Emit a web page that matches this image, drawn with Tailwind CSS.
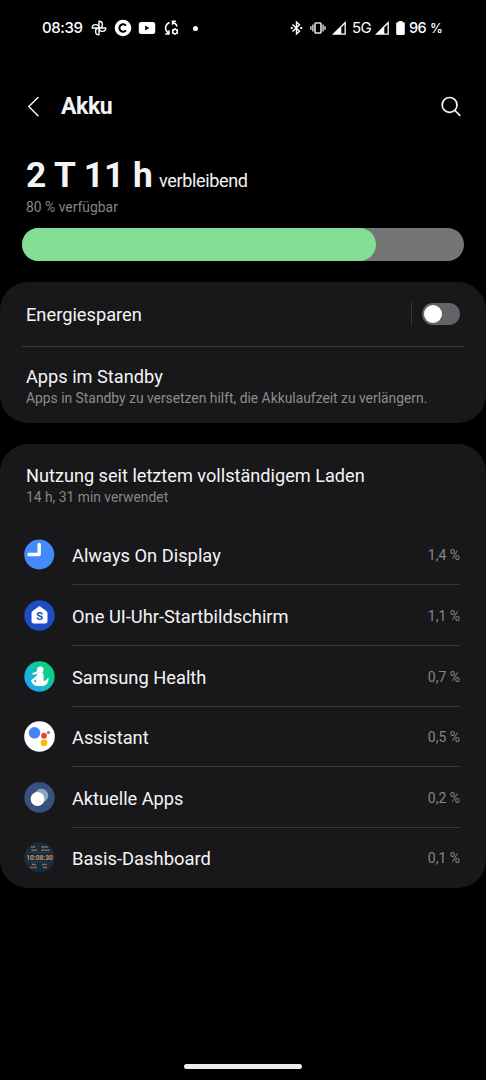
<!DOCTYPE html>
<html lang="de">
<head>
<meta charset="utf-8">
<title>Akku</title>
<script src="https://cdn.jsdelivr.net/npm/@tailwindcss/browser@4"></script>
</head>
<body class="bg-black">
<div class="flex h-[1080px] w-[486px] flex-col overflow-hidden bg-black font-['Roboto',sans-serif] text-[#f4f4f6]">
  <header class="flex h-14 shrink-0 items-center pl-[42px] pr-[42px] font-['Inter',sans-serif] text-[15px] font-medium text-white">
    <span class="w-[49px] whitespace-nowrap tracking-[-0.4px]">08:39</span>
    <svg class="h-4 w-4 shrink-0" viewBox="0 0 16 16" fill="none" stroke="#fff" stroke-width="1.4" stroke-linejoin="round"><path d="M8 8V1.200A3.300 3.300 0 0 1 8 8ZM8 8H14.800A3.300 3.300 0 0 1 8 8ZM8 8V14.800A3.300 3.300 0 0 1 8 8ZM8 8H1.200A3.300 3.300 0 0 1 8 8Z"/></svg>
    <svg class="ml-[7px] h-[18px] w-[18px] shrink-0" viewBox="0 0 18 18"><circle cx="9" cy="9" r="8.300" fill="#fff"/><path d="M11.900 6.600A3.700 3.700 0 1 0 11.900 11.400" fill="none" stroke="#000" stroke-width="2.100"/></svg>
    <svg class="ml-[6px] h-[14px] w-[18px] shrink-0" viewBox="0 0 18 14"><rect x=".8" y="1" width="16.400" height="12" rx="2.500" fill="#fff"/><path d="M7.200 4.600v4.800L11.300 7z" fill="#000"/></svg>
    <svg class="ml-[8px] h-4 w-4 shrink-0" viewBox="0 0 16 16" fill="none" stroke="#fff" stroke-width="1.500"><path d="M5.500 2.500C.8 4.500.2 10 4.300 13.200M1.200 13.900H5V10.300M13 6.500C12.600 4.500 11.500 3.300 9 2.500M11.900 1.300H8.500V4.800"/><circle cx="11" cy="11.500" r="2.300"/><path d="M11 8v1.300M11 13.700v1.300M8 9.800l1.200.7M12.800 12.500l1.200.7M8 13.200l1.200-.7M12.800 10.500l1.200-.7" stroke-width="1.100"/></svg>
    <span class="ml-[13px] h-[5px] w-[5px] shrink-0 rounded-full bg-white"></span>
    <svg class="ml-auto h-4 w-[13px] shrink-0" viewBox="0 0 13 16" fill="none" stroke="#fff" stroke-width="1.400"><path d="M2.500 4.500 9.500 11.300 6.500 14V2L9.500 4.700 2.500 11.500"/><path d="M.8 8h1.900M10.300 8h1.900" stroke-width="1.900"/></svg>
    <svg class="ml-[7px] h-4 w-4 shrink-0" viewBox="0 0 16 16" fill="none" stroke="#e0e0e0" stroke-width="1.400"><rect x="5" y="3" width="6" height="10" rx=".8" stroke-width="1.600"/><path d="M2.900 4.500v7M13.100 4.500v7M.9 6.200v3.600M15.100 6.200v3.600"/></svg>
    <svg class="ml-[6px] h-[14px] w-[14px] shrink-0" viewBox="0 0 14 14"><path d="M0 13.800H13.800V0Z" fill="#fff"/><path d="M9.300 6.400 12.500 3.200V12.500H9.300Z" fill="#000"/></svg>
    <span class="ml-[6px] w-[23px] whitespace-nowrap font-normal tracking-[-0.7px]">5G</span>
    <svg class="h-[14px] w-[14px] shrink-0" viewBox="0 0 14 14"><path d="M0 13.800H13.800V0Z" fill="#fff"/><path d="M9.300 6.400 12.500 3.200V12.500H9.300Z" fill="#000"/></svg>
    <svg class="ml-[7px] h-[14px] w-[9px] shrink-0" viewBox="0 0 9 14"><path d="M2.500 0h4v1.300H7.500Q8.800 1.300 8.800 2.500V12.700Q8.800 14 7.500 14H1.500Q.2 14 .2 12.700V2.500Q.2 1.300 1.500 1.300h1Z" fill="#fff"/></svg>
    <span class="ml-[4px] flex w-[35px] items-baseline gap-[4px] whitespace-nowrap text-[14.5px] tracking-[-0.6px]"><span>96</span> <span class="text-[13px]">%</span></span>
  </header>

  <div class="flex h-[101px] shrink-0 items-center pl-[27px] pr-[24px]">
    <svg class="h-6 w-3" viewBox="0 0 12 24" fill="none" stroke="#f4f4f6" stroke-width="1.500" stroke-linecap="round" stroke-linejoin="round"><path d="M11 2.500 1.800 11.500 11 20.700"/></svg>
    <h1 class="ml-[22px] pt-[2px] text-[23px] font-bold tracking-[-0.4px]">Akku</h1>
    <svg class="ml-auto h-[22px] w-[22px]" viewBox="0 0 22 22" fill="none" stroke="#f4f4f6" stroke-width="1.700" stroke-linecap="round"><circle cx="9.600" cy="8.900" r="7.400"/><path d="m15 14.500 4.800 4.800"/></svg>
  </div>

  <section class="h-[125px] shrink-0 px-[22px]">
    <div class="flex h-[40px] items-baseline pl-1">
      <span class="w-[126px] whitespace-nowrap text-[35.3px] font-bold leading-[36px]">2 T 11 h</span><span class="ml-[7px] text-[18px] leading-[26px] tracking-[-0.35px]">verbleibend</span>
    </div>
    <div class="flex h-[31px] items-start pl-1 text-[13.9px] leading-[20px] text-[#858587]">80 % verfügbar</div>
    <div class="h-[33px] overflow-hidden rounded-full bg-[#757575]"><div class="h-full w-[354px] rounded-r-full bg-[#82df94]"></div></div>
  </section>

  <section class="h-[141px] shrink-0 rounded-[28px] bg-[#18181a] px-[22px]">
    <div class="flex h-[65px] items-center border-b border-[#38383a] pl-1 pr-1">
      <span class="pt-[2px] text-[18.25px]">Energiesparen</span>
      <span class="ml-auto h-6 w-px bg-[#343436]"></span>
      <span class="ml-[10px] flex h-[22px] w-[38px] items-center rounded-full bg-[#646368] px-[2px]"><span class="h-[18px] w-[18px] rounded-full bg-white"></span></span>
    </div>
    <div class="pl-1 pt-[19px]">
      <div class="text-[18.2px] leading-[22px]">Apps im Standby</div>
      <div class="whitespace-nowrap text-[13.85px] leading-[20px] text-[#8c8c8e]">Apps in Standby zu versetzen hilft, die Akkulaufzeit zu verlängern.</div>
    </div>
  </section>

  <section class="mt-[21px] h-[444px] shrink-0 rounded-[28px] bg-[#18181a]">
    <div class="h-[80.5px] pl-[26px] pt-[21px]">
      <div class="whitespace-nowrap text-[18.15px] leading-[22px]">Nutzung seit letztem vollständigem Laden</div>
      <div class="text-[13.85px] leading-[21px] text-[#858587]">14 h, 31 min verwendet</div>
    </div>
    <div class="flex h-[60.7px] items-center pl-6 pr-[26px]">
      <svg class="h-[31px] w-[31px] shrink-0" viewBox="0 0 31 31"><circle cx="15.200" cy="15.500" r="15" fill="#448aff"/><path d="M15.200 5.500V15.500H5" fill="none" stroke="#fff" stroke-width="3.400" stroke-linecap="round" stroke-linejoin="round"/></svg>
      <div class="ml-[17px] flex h-full flex-1 items-center justify-between border-b border-[#38383a] pt-[3px]"><span class="text-[18.3px]">Always On Display</span><span class="text-[14px] text-[#858587]">1,4 %</span></div>
    </div>
    <div class="flex h-[60.7px] items-center pl-6 pr-[26px]">
      <svg class="h-[31px] w-[31px] shrink-0" viewBox="0 0 31 31"><circle cx="15.500" cy="15.500" r="15.200" fill="#1e4bc8"/><path d="M15.500 6.500 22.200 11.300Q23 12 23 13V21.500Q23 23 21.500 23H9.500Q8 23 8 21.500V13Q8 12 8.800 11.300Z" fill="#fff" stroke="#fff" stroke-linejoin="round"/><text x="15.500" y="20" text-anchor="middle" font-family="Roboto" font-weight="700" font-size="11.500" fill="#1e4bc8">S</text></svg>
      <div class="ml-[17px] flex h-full flex-1 items-center justify-between border-b border-[#38383a] pt-[3px]"><span class="text-[18.3px]">One UI-Uhr-Startbildschirm</span><span class="text-[14px] text-[#858587]">1,1 %</span></div>
    </div>
    <div class="flex h-[60.7px] items-center pl-6 pr-[26px]">
      <svg class="h-[31px] w-[31px] shrink-0" viewBox="0 0 31 31"><defs><linearGradient id="health" x1=".1" y1=".85" x2=".8" y2=".25"><stop offset="0" stop-color="#1fa2ff"/><stop offset=".5" stop-color="#15bcc0"/><stop offset="1" stop-color="#08d27c"/></linearGradient></defs><circle cx="15.500" cy="15.500" r="15.200" fill="url(#health)"/><circle cx="16.300" cy="8.600" r="3.200" fill="#fff"/><path d="M13.800 11.300 18.700 11.500Q20.500 14.500 19.300 19.300Q22 21 23.300 17.200Q24.500 16 24.700 18Q24 23.500 19.500 25H12.500Q8 24 7 19.200L12.300 15.300Z" fill="#fff"/><path d="M14 10.200Q12.500 12.500 9.300 12.700" fill="none" stroke="#fff" stroke-width="1.900" stroke-linecap="round"/><path d="M9.800 19.800 12.200 18.200 11.700 22Z" fill="#19afd8"/></svg>
      <div class="ml-[17px] flex h-full flex-1 items-center justify-between border-b border-[#38383a] pt-[3px]"><span class="text-[18.3px]">Samsung Health</span><span class="text-[14px] text-[#858587]">0,7 %</span></div>
    </div>
    <div class="flex h-[60.7px] items-center pl-6 pr-[26px]">
      <svg class="h-[31px] w-[31px] shrink-0" viewBox="0 0 31 31"><circle cx="15.500" cy="15.500" r="15.300" fill="#fff"/><circle cx="10.500" cy="11.800" r="5.800" fill="#4285f4"/><circle cx="20" cy="14.700" r="2.900" fill="#ea4335"/><circle cx="20" cy="21.800" r="3.400" fill="#fbbc04"/><circle cx="24.400" cy="11.500" r="1.500" fill="#34a853"/></svg>
      <div class="ml-[17px] flex h-full flex-1 items-center justify-between border-b border-[#38383a] pt-[3px]"><span class="text-[18.3px]">Assistant</span><span class="text-[14px] text-[#858587]">0,5 %</span></div>
    </div>
    <div class="flex h-[60.7px] items-center pl-6 pr-[26px]">
      <svg class="h-[31px] w-[31px] shrink-0" viewBox="0 0 31 31"><circle cx="15.500" cy="15.500" r="15.200" fill="#38517f"/><circle cx="17.500" cy="13.500" r="6.800" fill="#86a9b9"/><circle cx="13.500" cy="17" r="6.900" fill="#fff"/></svg>
      <div class="ml-[17px] flex h-full flex-1 items-center justify-between border-b border-[#38383a] pt-[3px]"><span class="text-[18.2px]">Aktuelle Apps</span><span class="text-[14px] text-[#858587]">0,2 %</span></div>
    </div>
    <div class="flex h-[60px] items-center pl-6 pr-[26px]">
      <svg class="h-[31px] w-[31px] shrink-0" viewBox="0 0 31 31"><circle cx="15.500" cy="15.500" r="15.200" fill="#172d3d"/><path d="M2 10.500H29M2 20H29" stroke="#35444d" stroke-width=".6"/><text x="15.500" y="18" text-anchor="middle" font-family="Roboto" font-weight="700" font-size="7" textLength="26.500" lengthAdjust="spacingAndGlyphs" fill="#d58d61">10:08:30</text><path d="M7 5H11M7.500 8.200H13M17.500 5H24M17.500 8.200H25.500M8 22.500H12M6.500 25.500H13M18 22.500H23M19 25.500H23" stroke="#a6775c" stroke-width="1.500" stroke-dasharray="1.700 .5"/></svg>
      <div class="ml-[17px] flex h-full flex-1 items-center justify-between pt-[2px]"><span class="text-[18.4px]">Basis-Dashboard</span><span class="text-[14px] text-[#858587]">0,1 %</span></div>
    </div>
  </section>
  <div class="mx-auto mb-[11px] mt-auto h-[5px] w-[118px] shrink-0 rounded-full bg-[#ededed]"></div>
</div>
</body>
</html>
